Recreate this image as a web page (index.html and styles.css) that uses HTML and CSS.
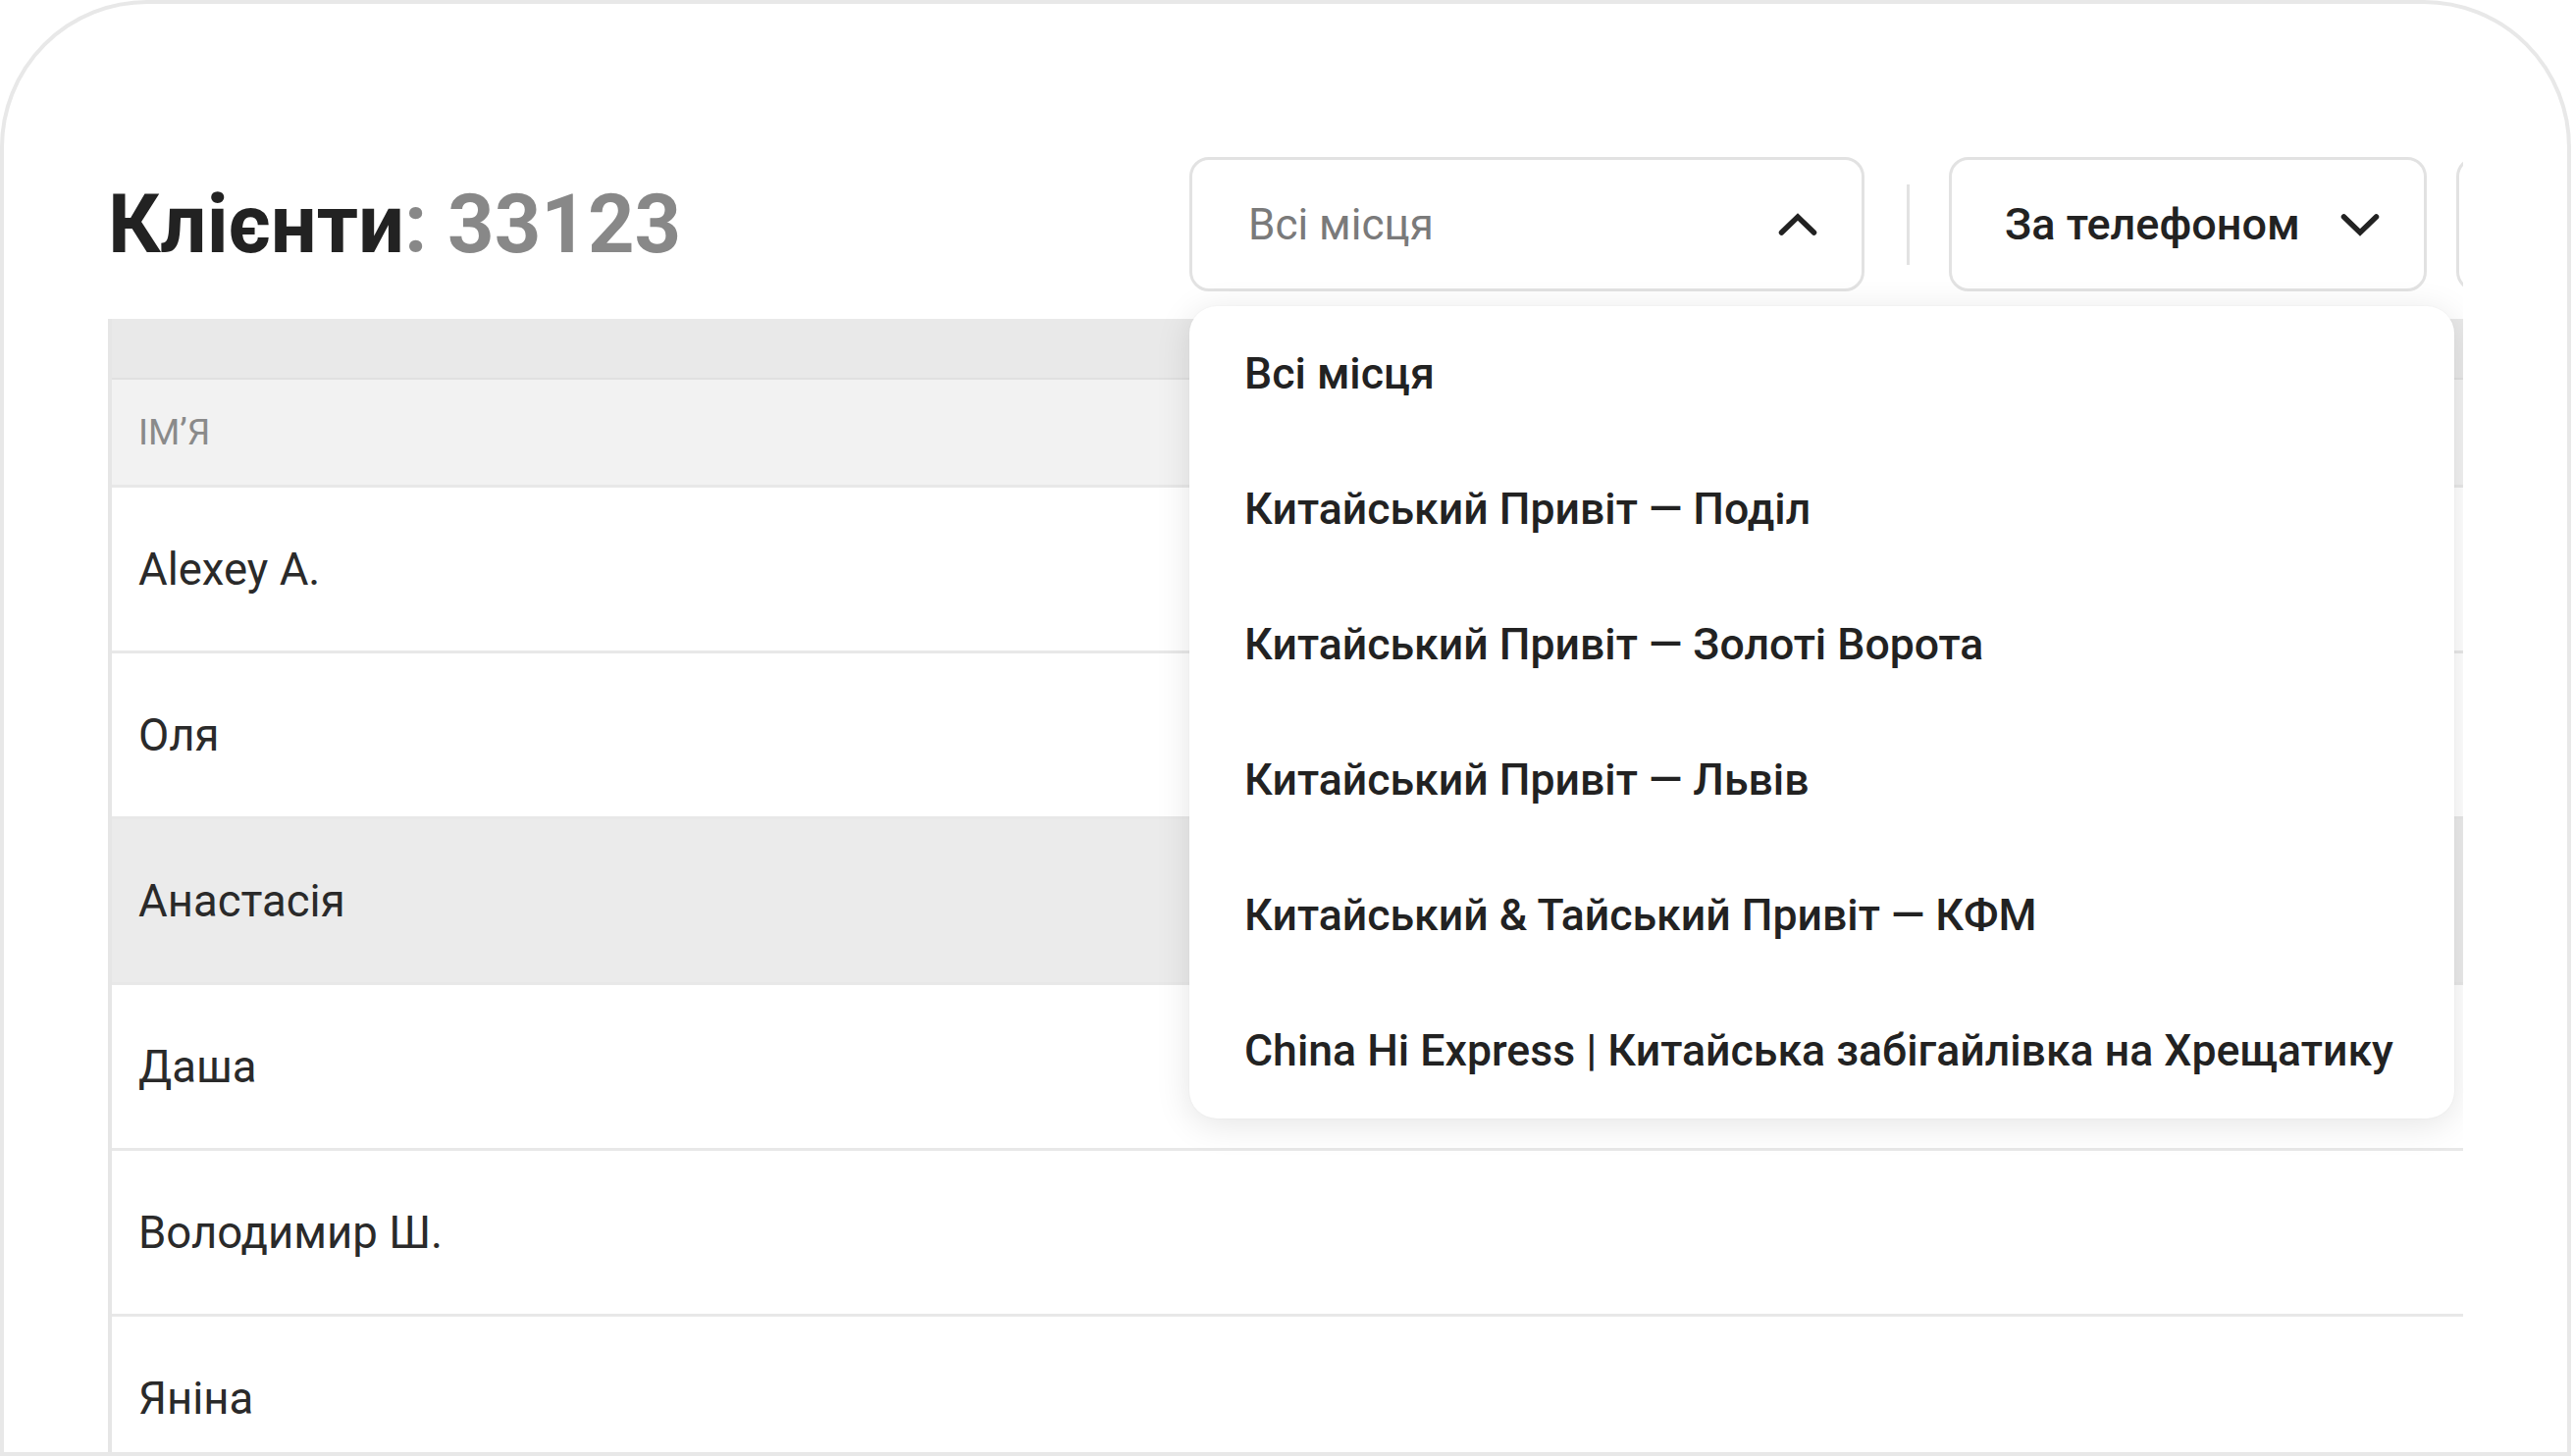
FILE: index.html
```html
<!DOCTYPE html>
<html lang="uk">
<head>
<meta charset="utf-8">
<title>Клієнти</title>
<link rel="stylesheet" href="styles.css">
</head>
<body>
<div class="frame">
  <div class="content">
    <header class="toolbar">
      <h1 class="title"><span class="title-label">Клієнти</span><span class="title-count">: 33123</span></h1>
      <div class="filters">
        <div class="select-wrap">
          <div class="select select--place">
            <span class="select-value select-value--placeholder">Всі місця</span>
            <svg class="chevron" viewBox="0 0 40 24" aria-hidden="true"><path d="M3.5 20 L20 4 L36.5 20"/></svg>
          </div>
          <ul class="menu">
            <li class="menu-item">Всі місця</li>
            <li class="menu-item">Китайський Привіт — Поділ</li>
            <li class="menu-item">Китайський Привіт — Золоті Ворота</li>
            <li class="menu-item">Китайський Привіт — Львів</li>
            <li class="menu-item">Китайський &amp; Тайський Привіт — КФМ</li>
            <li class="menu-item">China Hi Express | Китайська забігайлівка на Хрещатику</li>
          </ul>
        </div>
        <span class="divider"></span>
        <div class="select select--sort">
          <span class="select-value">За телефоном</span>
          <svg class="chevron" viewBox="0 0 40 24" aria-hidden="true"><path d="M3.5 4 L20 20 L36.5 4"/></svg>
        </div>
        <div class="select select--more"></div>
      </div>
    </header>

    <div class="table">
      <div class="table-band"></div>
      <div class="table-head">ІМ’Я</div>
      <div class="row">Alexey A.</div>
      <div class="row">Оля</div>
      <div class="row row--active">Анастасія</div>
      <div class="row">Даша</div>
      <div class="row">Володимир Ш.</div>
      <div class="row">Яніна</div>
    </div>
  </div>
</div>
</body>
</html>
```

FILE: styles.css
```css
html, body {
  margin: 0;
  padding: 0;
  background: #ffffff;
}

body {
  width: 2622px;
  height: 1484px;
  overflow: hidden;
  font-family: Roboto, "Noto Sans", "Liberation Sans", sans-serif;
  color: #222222;
}

.frame {
  box-sizing: border-box;
  width: 2620px;
  height: 1484px;
  border: 4px solid #e8e8e8;
  border-radius: 150px 150px 0 0;
  padding: 156px 106px 0 106px;
  background: #ffffff;
}

.content {
  height: 100%;
  overflow: hidden;
}

/* ---------- toolbar ---------- */
.toolbar {
  display: grid;
  grid-template-columns: 1102px 1fr;
  align-items: center;
  height: 137px;
}

.title {
  margin: 0;
  font-size: 83px;
  line-height: 1;
  font-weight: 700;
  letter-spacing: 0;
  white-space: nowrap;
}

.title-label {
  color: #222222;
}

.title-count {
  color: #888888;
}

.filters {
  display: flex;
  align-items: center;
  flex-wrap: nowrap;
}

.select-wrap {
  position: relative;
  flex: 0 0 auto;
}

.select {
  box-sizing: border-box;
  flex: 0 0 auto;
  height: 137px;
  display: flex;
  align-items: center;
  border: 3px solid #e2e2e2;
  border-radius: 20px;
  background: #ffffff;
}

.select--place {
  width: 688px;
  padding: 0 45px 0 57px;
  justify-content: space-between;
}

.select--sort {
  padding: 0 45px 0 54px;
  gap: 41px;
}

.select--more {
  width: 483px;
  margin-left: 30px;
}

.select-value {
  font-size: 45px;
  font-weight: 500;
  color: #222222;
  white-space: nowrap;
}

.select-value--placeholder {
  font-size: 44px;
  font-weight: 400;
  color: #7a7a7a;
}

.chevron {
  width: 40px;
  height: 24px;
  flex: 0 0 auto;
}

.chevron path {
  fill: none;
  stroke: #222222;
  stroke-width: 5.5;
  stroke-linecap: round;
  stroke-linejoin: miter;
}

.divider {
  flex: 0 0 auto;
  width: 3px;
  height: 82px;
  margin: 0 40px 0 43px;
  background: #e2e2e2;
}

/* ---------- dropdown menu ---------- */
.menu {
  position: absolute;
  top: calc(100% + 15px);
  left: 0;
  z-index: 10;
  box-sizing: border-box;
  width: 1289px;
  margin: 0;
  padding: 0;
  list-style: none;
  background: #ffffff;
  border-radius: 28px;
  box-shadow: 0 6px 36px rgba(0, 0, 0, 0.11), 0 0 2px rgba(0, 0, 0, 0.05);
}

.menu-item {
  height: 138px;
  display: flex;
  align-items: center;
  padding-left: 56px;
  font-size: 44.6px;
  font-weight: 500;
  color: #222222;
  white-space: nowrap;
}

/* ---------- table ---------- */
.table {
  margin-top: 28px;
  border-left: 4px solid #e6e6e6;
}

.table-band {
  height: 60px;
  background: #e9e9e9;
}

.table-head {
  box-sizing: border-box;
  height: 112px;
  display: flex;
  align-items: center;
  padding-left: 27px;
  background: #f2f2f2;
  border-top: 2px solid #e0e0e0;
  border-bottom: 3px solid #e8e8e8;
  font-size: 37px;
  font-weight: 400;
  color: #8a8a8a;
  text-transform: uppercase;
}

.row {
  box-sizing: border-box;
  height: 169px;
  display: flex;
  align-items: center;
  padding-left: 27px;
  border-bottom: 3px solid #e8e8e8;
  background: #ffffff;
  font-size: 45.5px;
  font-weight: 400;
  color: #2a2a2a;
  white-space: nowrap;
}

.row--active {
  background: #ebebeb;
}
```
